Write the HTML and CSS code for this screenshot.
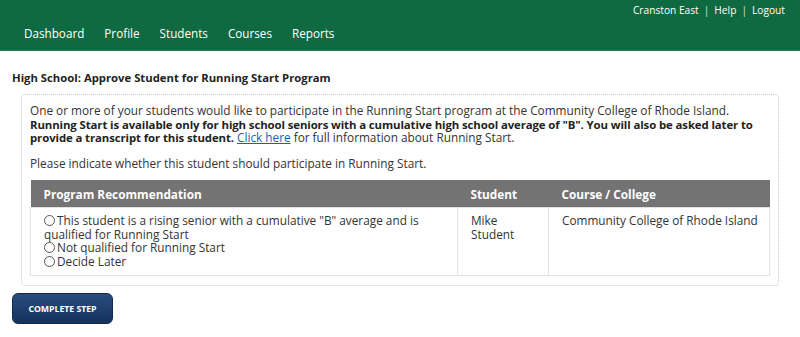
FILE: index.html
```html
<!DOCTYPE html>
<html lang="en">
<head>
    <meta charset="UTF-8">
    <title>Approve Student for Running Start</title>
    <link rel="stylesheet" href="styles.css">
</head>
<body>
    <div class="header">
        <div class="top-links">
            <a href="#">Cranston East</a>
            <span class="sep">|</span>
            <a href="#">Help</a>
            <span class="sep">|</span>
            <a href="#">Logout</a>
        </div>
        <div class="nav">
            <a href="#">Dashboard</a>
            <a href="#">Profile</a>
            <a href="#">Students</a>
            <a href="#">Courses</a>
            <a href="#">Reports</a>
        </div>
    </div>

    <div class="content">
        <h1 class="page-title">High School: Approve Student for Running Start Program</h1>

        <div class="panel">
            <p>
                One or more of your students would like to participate in the Running Start program at the Community College of Rhode Island.<br>
                <b>Running Start is available only for high school seniors with a cumulative high school average of "B". You will also be asked later to<br>
                provide a transcript for this student.</b>
                <a href="#" class="link">Click here</a> for full information about Running Start.
            </p>
            <p class="prompt">Please indicate whether this student should participate in Running Start.</p>

            <table class="grid">
                <thead>
                    <tr>
                        <th class="col-rec">Program Recommendation</th>
                        <th class="col-student">Student</th>
                        <th class="col-course">Course / College</th>
                    </tr>
                </thead>
                <tbody>
                    <tr>
                        <td>
                            <label class="option"><span class="radio"></span>This student is a rising senior with a cumulative "B" average and is qualified for Running Start</label>
                            <label class="option"><span class="radio"></span>Not qualified for Running Start</label>
                            <label class="option"><span class="radio"></span>Decide Later</label>
                        </td>
                        <td>Mike Student</td>
                        <td class="course">Community College of Rhode Island</td>
                    </tr>
                </tbody>
            </table>
        </div>

        <button class="btn-complete">Complete Step</button>
    </div>
</body>
</html>
```

FILE: styles.css
```css
body {
    margin: 0;
    font-family: 'Open Sans', sans-serif;
    font-size: 12px;
    color: #333;
    background-color: #fff;
}

.header {
    background-color: #0f6a42;
    height: 50px;
    border-bottom: 1px solid #2f7d58;
}

.top-links {
    display: flex;
    justify-content: flex-end;
    align-items: center;
    gap: 5px;
    padding: 1px 15px 0 0;
    height: 18px;
    font-size: 10.2px;
}

.top-links a {
    color: #fff;
    text-decoration: none;
}

.top-links .sep {
    color: #cfe4d8;
}

.nav {
    display: flex;
    gap: 20px;
    padding: 6px 0 0 24px;
}

.nav a {
    color: #fff;
    text-decoration: none;
    font-size: 11.7px;
}

.content {
    padding: 0 12px;
}

.page-title {
    font-size: 11.3px;
    font-weight: bold;
    color: #222;
    margin: 19px 0 9px 0;
}

.panel {
    margin-left: 9px;
    margin-right: 9px;
    border: 1px dotted #c8c8c8;
    border-radius: 4px;
    padding: 9px 8px 9px 8px;
}

.panel p {
    margin: 0 0 12px 0;
    line-height: 13.5px;
    font-size: 11.8px;
}

.panel p.prompt {
    margin-bottom: 10px;
}

.panel b {
    color: #222;
    font-size: 11.4px;
    letter-spacing: -0.1px;
}

.link {
    color: #1a5fb4;
    text-decoration: underline;
}

.grid {
    width: 100%;
    border-collapse: collapse;
    font-size: 11.8px;
}

.grid th {
    background-color: #737373;
    color: #fff;
    text-align: left;
    font-weight: bold;
    height: 27px;
    padding: 0 13px;
}

.grid td {
    border: 1px solid #e2e2e2;
    vertical-align: top;
    padding: 6px 13px 7px 13px;
    line-height: 13.6px;
    height: 54px;
}

.grid td.course {
    padding-right: 4px;
    white-space: nowrap;
}

.grid .col-rec {
    width: 401px;
}

.grid .col-student {
    width: 65px;
}

.option {
    display: block;
}

.radio {
    display: inline-block;
    width: 9px;
    height: 9px;
    border: 1px solid #555;
    border-radius: 50%;
    margin-right: 2px;
    vertical-align: -1px;
}

.btn-complete {
    margin-top: 7px;
    width: 101px;
    height: 31px;
    border: 1px solid #0e2a4f;
    border-radius: 6px;
    background: linear-gradient(to bottom, #2b4d7c, #13325e);
    color: #fff;
    font-family: 'Open Sans', sans-serif;
    font-size: 8.7px;
    font-weight: bold;
    text-transform: uppercase;
    cursor: pointer;
}
```
